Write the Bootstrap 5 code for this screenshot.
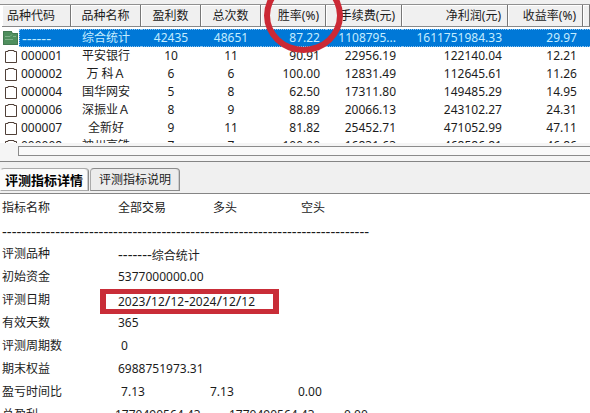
<!DOCTYPE html>
<html lang="zh-CN">
<head>
<meta charset="utf-8">
<meta name="viewport" content="width=device-width, initial-scale=1">
<title>评测指标详情</title>
<link href="https://cdn.jsdelivr.net/npm/bootstrap@5.3.0/dist/css/bootstrap.min.css" rel="stylesheet">
<style>
  body { font: 12px/18px "Noto Sans", "Noto Sans CJK SC", sans-serif; color: #1c1c1c; background: #f0f0f0; }
  .top-strip { height: 5px; border-bottom: 1px solid #909090; }
  .list-pane { height: 138px; padding-left: 2px; }
  .quotes { table-layout: fixed; border-collapse: separate; border-spacing: 0; width: 100%; white-space: nowrap; }
  .quotes th { height: 22px; padding: 1px 6px 0; font-weight: 400; line-height: 20px; background: #f0f0f0; border-right: 1px solid #777; border-bottom: 1px solid #888; box-shadow: inset 1px 1px #fff; overflow: hidden; }
  .quotes thead::after { content: ""; display: block; height: 2px; }
  .quotes td { height: 18px; padding: 0 6px; line-height: 18px; }
  .quotes .code { padding: 0; }
  .quotes th:first-child { padding-left: 5px; }
  .quotes svg { flex: none; width: 17px; height: 18px; margin-right: 2px; }
  .picked td { color: #c4edff; background: #0078d7; border-top: 1px dotted #8cc4ee; border-bottom: 1px dotted #8cc4ee; line-height: 16px; }
  .picked .code { background: #fff; border: 0; }
  .picked .code svg { margin-right: 0; }
  .picked .code-text { flex: 1; background: #0078d7; border: 1px dotted #8cc4ee; border-right: 0; height: 18px; line-height: 16px; padding-left: 2px; }
  .dashes { font-size: 15px; }
  .ring { left: 264px; top: -22px; width: 79px; height: 75px; border: 6px solid #cb2935; border-radius: 50%; pointer-events: none; }
  .scroll-zone { padding: 3px 0 5px 18px; background: #f5f5f5; border-bottom: 1px solid #858585; }
  .scroll-track { height: 10px; border: 1px solid #8b8b8b; border-right: 0; background: #f9f9f9; }
  .tab-strip { padding: 6px 0 2px; border-bottom: 1px solid #858585; }
  .tab-strip .nav-link { height: 23px; margin: 0 1px 0 0; padding: 0 8px; color: #1c1c1c; line-height: 22px; border: 1px solid #8b8b8b; border-left-color: #aaa; border-radius: 4px 4px 0 0; background: #ececec; box-shadow: inset -1px 0 #ccc; }
  .tab-strip .nav-link.active { padding: 0 5px 0 4px; font-size: 13px; font-weight: 700; color: #000; background: #fbfbfb; border-color: #aaa #8b8b8b #aaa #fbfbfb; }
  .detail-pane { padding: 3px 2px 0; }
  .metrics { width: 100%; line-height: 22px; white-space: pre; }
  .metrics tr { display: grid; grid-template-columns: 116px 92px 88px 1fr; height: 23px; }
  .metrics .totals { grid-template-columns: 113px 114px 115px 1fr; }
  .metrics th, .metrics td { padding: 0; font-weight: 400; }
  .metrics .rule { grid-column: 1 / -1; }
  .date-mark { display: inline-block; margin: 0 -24px 0 -18px; padding: 0 18px 0 12px; border: 5px solid #c92d38; border-width: 5px 6px; height: 25px; line-height: 13px; }
</style>
<script src="https://cdn.jsdelivr.net/npm/bootstrap@5.3.0/dist/js/bootstrap.bundle.min.js"></script>
</head>
<body class="vh-100 d-flex flex-column overflow-hidden position-relative">
<svg class="d-none" aria-hidden="true">
  <symbol id="clip" viewBox="0 0 17 18">
    <path d="M3.500 4.500H6V3.500h6v1h2.500v11h-11z" fill="#fff" stroke="#504038"/>
  </symbol>
</svg>
<div class="top-strip flex-shrink-0"></div>
<main class="d-flex flex-column flex-grow-1 overflow-hidden">
  <div class="list-pane bg-white overflow-hidden flex-shrink-0">
    <table class="quotes">
      <colgroup>
        <col style="width:69px"><col style="width:70px"><col style="width:60px"><col style="width:60px"><col style="width:65px"><col style="width:76px"><col style="width:106px"><col style="width:75px"><col>
      </colgroup>
      <thead>
        <tr><th>品种代码</th><th class="text-center">品种名称</th><th class="text-center">盈利数</th><th class="text-center">总次数</th><th class="text-end">胜率(%)</th><th class="text-end">手续费(元)</th><th class="text-end">净利润(元)</th><th class="text-end">收益率(%)</th><th></th></tr>
      </thead>
      <tbody>
        <tr class="picked"><td class="code"><div class="d-flex"><svg viewBox="0 0 17 18" aria-hidden="true"><path d="M1 2h9v2h6v12H1z" fill="#4f8f5e"/><path d="M1.500 2.500h8l1 2h5v11h-14z" fill="none" stroke="#447a52"/><path d="M3 7.500h5l2-2M11 7.500h3M3 10.500h8" fill="none" stroke="#7fb08a"/></svg><span class="code-text"><span class="dashes">------</span></span></div></td><td class="text-center">综合统计</td><td class="text-center">42435</td><td class="text-center">48651</td><td class="text-end">87.22</td><td class="text-end text-truncate">1108795...</td><td class="text-end">1611751984.33</td><td class="text-end">29.97</td><td></td></tr>
        <tr><td class="code"><div class="d-flex"><svg aria-hidden="true"><use href="#clip"/></svg>000001</div></td><td class="text-center">平安银行</td><td class="text-center">10</td><td class="text-center">11</td><td class="text-end">90.91</td><td class="text-end">22956.19</td><td class="text-end">122140.04</td><td class="text-end">12.21</td><td></td></tr>
        <tr><td class="code"><div class="d-flex"><svg aria-hidden="true"><use href="#clip"/></svg>000002</div></td><td class="text-center">万 科Ａ</td><td class="text-center">6</td><td class="text-center">6</td><td class="text-end">100.00</td><td class="text-end">12831.49</td><td class="text-end">112645.61</td><td class="text-end">11.26</td><td></td></tr>
        <tr><td class="code"><div class="d-flex"><svg aria-hidden="true"><use href="#clip"/></svg>000004</div></td><td class="text-center">国华网安</td><td class="text-center">5</td><td class="text-center">8</td><td class="text-end">62.50</td><td class="text-end">17311.80</td><td class="text-end">149485.29</td><td class="text-end">14.95</td><td></td></tr>
        <tr><td class="code"><div class="d-flex"><svg aria-hidden="true"><use href="#clip"/></svg>000006</div></td><td class="text-center">深振业Ａ</td><td class="text-center">8</td><td class="text-center">9</td><td class="text-end">88.89</td><td class="text-end">20066.13</td><td class="text-end">243102.27</td><td class="text-end">24.31</td><td></td></tr>
        <tr><td class="code"><div class="d-flex"><svg aria-hidden="true"><use href="#clip"/></svg>000007</div></td><td class="text-center">全新好</td><td class="text-center">9</td><td class="text-center">11</td><td class="text-end">81.82</td><td class="text-end">25452.71</td><td class="text-end">471052.99</td><td class="text-end">47.11</td><td></td></tr>
        <tr><td class="code"><div class="d-flex"><svg aria-hidden="true"><use href="#clip"/></svg>000008</div></td><td class="text-center">神州高铁</td><td class="text-center">7</td><td class="text-center">7</td><td class="text-end">100.00</td><td class="text-end">16831.63</td><td class="text-end">468586.81</td><td class="text-end">46.86</td><td></td></tr>
      </tbody>
    </table>
  </div>
  <div class="scroll-zone flex-shrink-0"><div class="scroll-track"></div></div>
  <div class="nav tab-strip flex-shrink-0" role="tablist">
    <button type="button" class="nav-link active" role="tab" aria-selected="true" aria-controls="detail">评测指标详情</button>
    <button type="button" class="nav-link" role="tab" aria-selected="false">评测指标说明</button>
  </div>
  <section id="detail" role="tabpanel" class="detail-pane bg-white flex-grow-1 overflow-hidden">
    <table class="metrics">
      <tbody>
        <tr><th>指标名称</th><th>全部交易</th><th> 多头</th><th> 空头</th></tr>
        <tr><td class="rule dashes">----------------------------------------------------------------------------</td></tr>
        <tr><th>评测品种</th><td><span class="dashes">-------</span>综合统计</td></tr>
        <tr><th>初始资金</th><td>5377000000.00</td></tr>
        <tr><th>评测日期</th><td><span class="date-mark">2023<span class="dashes">/</span>12<span class="dashes">/</span>12<span class="dashes">-</span>2024<span class="dashes">/</span>12<span class="dashes">/</span>12</span></td></tr>
        <tr><th>有效天数</th><td>365</td></tr>
        <tr><th>评测周期数</th><td> 0</td></tr>
        <tr><th>期末权益</th><td>6988751973.31</td></tr>
        <tr><th>盈亏时间比</th><td> 7.13</td><td>7.13</td><td>0.00</td></tr>
        <tr class="totals"><th>总盈利</th><td>1770490564.43</td><td>1770490564.43</td><td>0.00</td></tr>
      </tbody>
    </table>
  </section>
</main>
<div class="ring position-absolute" aria-hidden="true"></div>
</body>
</html>
